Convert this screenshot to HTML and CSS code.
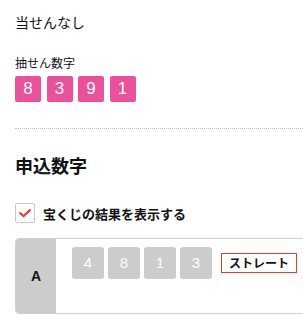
FILE: index.html
```html
<!DOCTYPE html>
<html lang="ja">
<head>
    <meta charset="UTF-8">
    <title>宝くじ結果</title>
    <link rel="stylesheet" href="styles.css">
</head>
<body>
<div class="page">
    <div class="result">
        <div class="result-text">当せんなし</div>
        <div class="draw-label">抽せん数字</div>
        <div class="draw-nums">
            <span class="num-pink">8</span>
            <span class="num-pink">3</span>
            <span class="num-pink">9</span>
            <span class="num-pink">1</span>
        </div>
    </div>

    <hr class="dotted">

    <h2 class="apply-title">申込数字</h2>

    <label class="check-row">
        <span class="check-box">
            <svg width="14" height="10" viewBox="0 0 14 10">
                <path d="M1.5 4.5 L5.5 8 L12.5 1.5" fill="none" stroke="#e8383d" stroke-width="2.2"/>
            </svg>
        </span>
        <span class="check-text">宝くじの結果を表示する</span>
    </label>

    <div class="entry">
        <div class="entry-key">A</div>
        <div class="entry-body">
            <span class="num-gray">4</span>
            <span class="num-gray">8</span>
            <span class="num-gray">1</span>
            <span class="num-gray">3</span>
            <span class="tag">ストレート</span>
        </div>
    </div>
</div>
</body>
</html>
```

FILE: styles.css
```css
html, body {
    margin: 0;
    padding: 0;
    background: #fff;
    overflow: hidden;
}

body {
    font-family: "Noto Sans CJK JP", "Noto Sans", sans-serif;
    color: #111;
}

.page {
    padding: 12px 0 0 15px;
}

.result-text {
    font-size: 14px;
    line-height: 20px;
}

.draw-label {
    margin-top: 22px;
    font-size: 12px;
    line-height: 18px;
}

.draw-nums {
    display: flex;
    gap: 5.5px;
    margin-top: 4px;
}

.num-pink {
    width: 26px;
    height: 26px;
    background-color: #eb509a;
    color: #fff;
    border-radius: 2px;
    font-family: "Liberation Sans", sans-serif;
    font-size: 17px;
    line-height: 26px;
    text-align: center;
}

.dotted {
    border: 0;
    border-top: 1px dotted #bbb;
    margin: 26px 0 0 0;
    height: 0;
}

.apply-title {
    margin: 24px 0 0 0;
    font-size: 18px;
    line-height: 24px;
    font-weight: bold;
}

.check-row {
    display: flex;
    align-items: center;
    margin-top: 26px;
}

.check-box {
    width: 18px;
    height: 18px;
    border: 1px solid #c8c8c8;
    border-radius: 2px;
    display: flex;
    align-items: center;
    justify-content: center;
}

.check-text {
    margin-left: 8px;
    font-size: 13px;
    font-weight: bold;
}

.entry {
    display: flex;
    width: 300px;
    height: 74px;
    margin-top: 15px;
    border: 1px solid #cfcfcf;
    border-radius: 4px;
    overflow: hidden;
}

.entry-key {
    width: 40px;
    background-color: #cccccc;
    display: flex;
    align-items: center;
    justify-content: center;
    font-family: "Liberation Sans", sans-serif;
    font-weight: bold;
    font-size: 14px;
}

.entry-body {
    display: flex;
    align-items: center;
    align-self: flex-start;
    gap: 4px;
    padding: 8px 0 0 16px;
}

.num-gray {
    width: 32px;
    height: 32px;
    background-color: #cccccc;
    color: #fff;
    border-radius: 3px;
    font-family: "Liberation Sans", sans-serif;
    font-size: 15px;
    line-height: 32px;
    text-align: center;
}

.tag {
    margin-left: 5px;
    width: 74px;
    height: 18px;
    border: 1px solid #e0402f;
    font-size: 12px;
    font-weight: bold;
    line-height: 18px;
    text-align: center;
}
```
